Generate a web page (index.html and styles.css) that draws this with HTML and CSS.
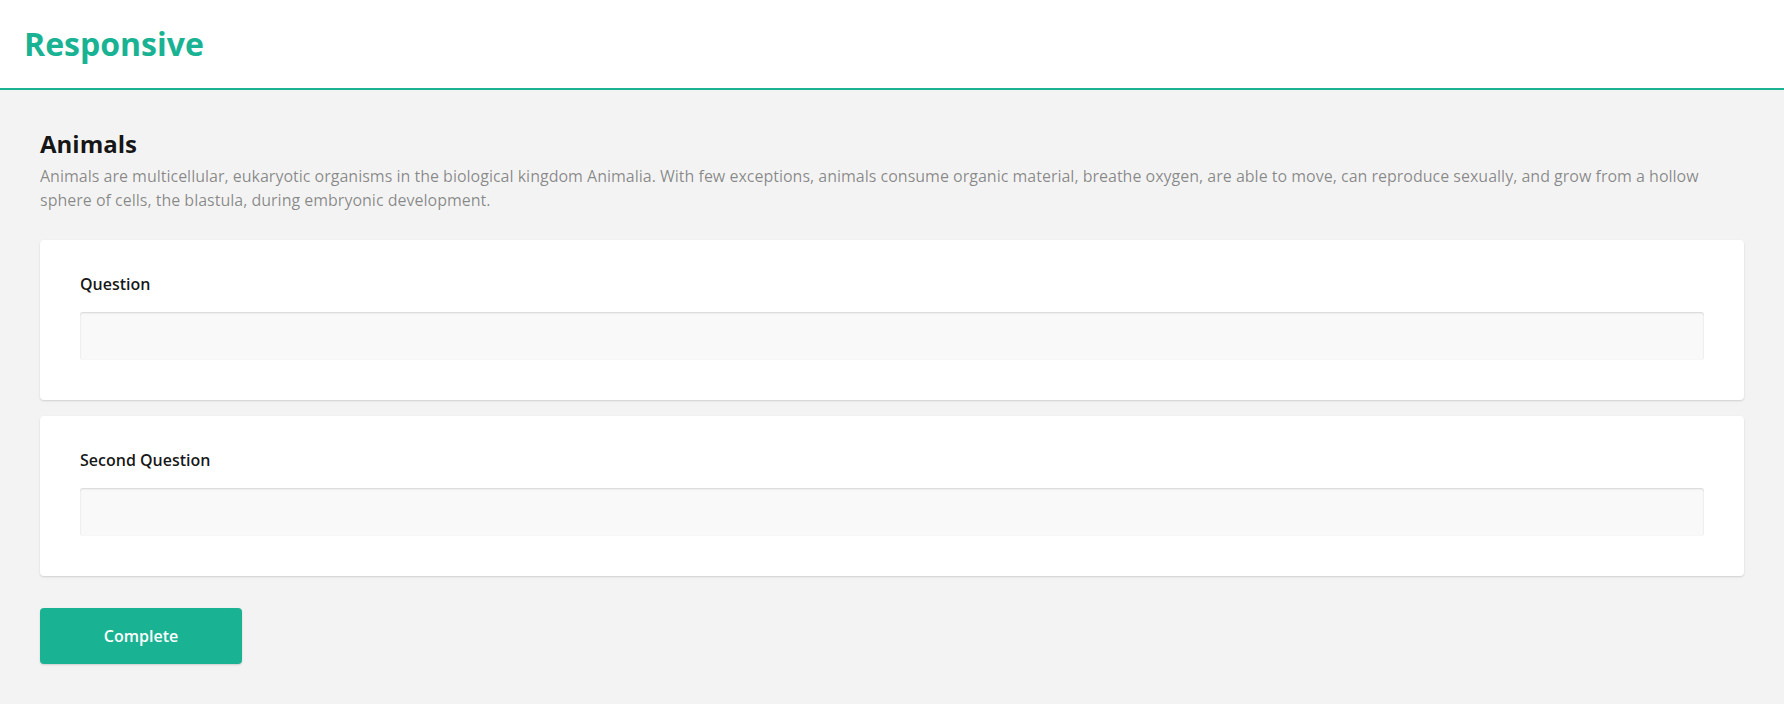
FILE: index.html
```html
<!DOCTYPE html>
<html lang="en">
<head>
<meta charset="utf-8">
<title>Responsive</title>
<link rel="stylesheet" href="styles.css">
</head>
<body>
<header class="survey-header">
  <h1 class="survey-title">Responsive</h1>
</header>
<main class="survey-body">
  <div class="page-head">
    <h2 class="page-title">Animals</h2>
    <p class="page-desc">Animals are multicellular, eukaryotic organisms in the biological kingdom Animalia. With few exceptions, animals consume organic material, breathe oxygen, are able to move, can reproduce sexually, and grow from a hollow sphere of cells, the blastula, during embryonic development.</p>
  </div>
  <div class="questions">
    <div class="question">
      <label class="q-title" for="q1">Question</label>
      <input class="q-input" id="q1" type="text">
    </div>
    <div class="question">
      <label class="q-title" for="q2">Second Question</label>
      <input class="q-input" id="q2" type="text">
    </div>
  </div>
  <div class="nav">
    <button class="btn-complete" type="button">Complete</button>
  </div>
</main>
</body>
</html>
```

FILE: styles.css
```css
* { box-sizing: border-box; }

html, body {
  margin: 0;
  padding: 0;
}

body {
  background: #f3f3f3;
  font-family: "Open Sans", "Liberation Sans", sans-serif;
  color: rgba(0, 0, 0, 0.91);
}

.survey-header {
  background: #ffffff;
  padding: 24px 24px;
  border-bottom: 2px solid #19b394;
}

.survey-title {
  margin: 0;
  font-size: 32px;
  line-height: 40px;
  font-weight: 700;
  color: #19b394;
}

.survey-body {
  padding: 38px 40px 40px;
}

.page-title {
  margin: 0;
  font-size: 24px;
  line-height: 32px;
  font-weight: 700;
  color: rgba(0, 0, 0, 0.91);
}

.page-desc {
  margin: 4px 0 0;
  font-size: 16px;
  line-height: 24px;
  color: rgba(0, 0, 0, 0.45);
}

.questions {
  margin-top: 28px;
  display: flex;
  flex-direction: column;
  gap: 16px;
}

.question {
  background: #ffffff;
  border-radius: 4px;
  box-shadow: 0 1px 2px 0 rgba(0, 0, 0, 0.15);
  padding: 32px 40px 40px;
  display: flex;
  flex-direction: column;
  gap: 16px;
}

.q-title {
  font-size: 16px;
  line-height: 24px;
  font-weight: 600;
  color: rgba(0, 0, 0, 0.91);
}

.q-input {
  display: block;
  width: 100%;
  height: 48px;
  margin: 0;
  padding: 12px 16px;
  border: none;
  border-radius: 3px;
  background: #f9f9f9;
  box-shadow: inset 0 1px 2px 0 rgba(0, 0, 0, 0.15);
  font-family: inherit;
  font-size: 16px;
  outline: none;
}

.nav {
  margin-top: 32px;
  display: flex;
}

.btn-complete {
  width: 202px;
  height: 56px;
  padding: 0;
  border: none;
  border-radius: 4px;
  background: #19b394;
  color: #ffffff;
  font-family: inherit;
  font-size: 16px;
  line-height: 24px;
  font-weight: 600;
  box-shadow: 0 1px 2px 0 rgba(0, 0, 0, 0.15);
  cursor: pointer;
}
```
